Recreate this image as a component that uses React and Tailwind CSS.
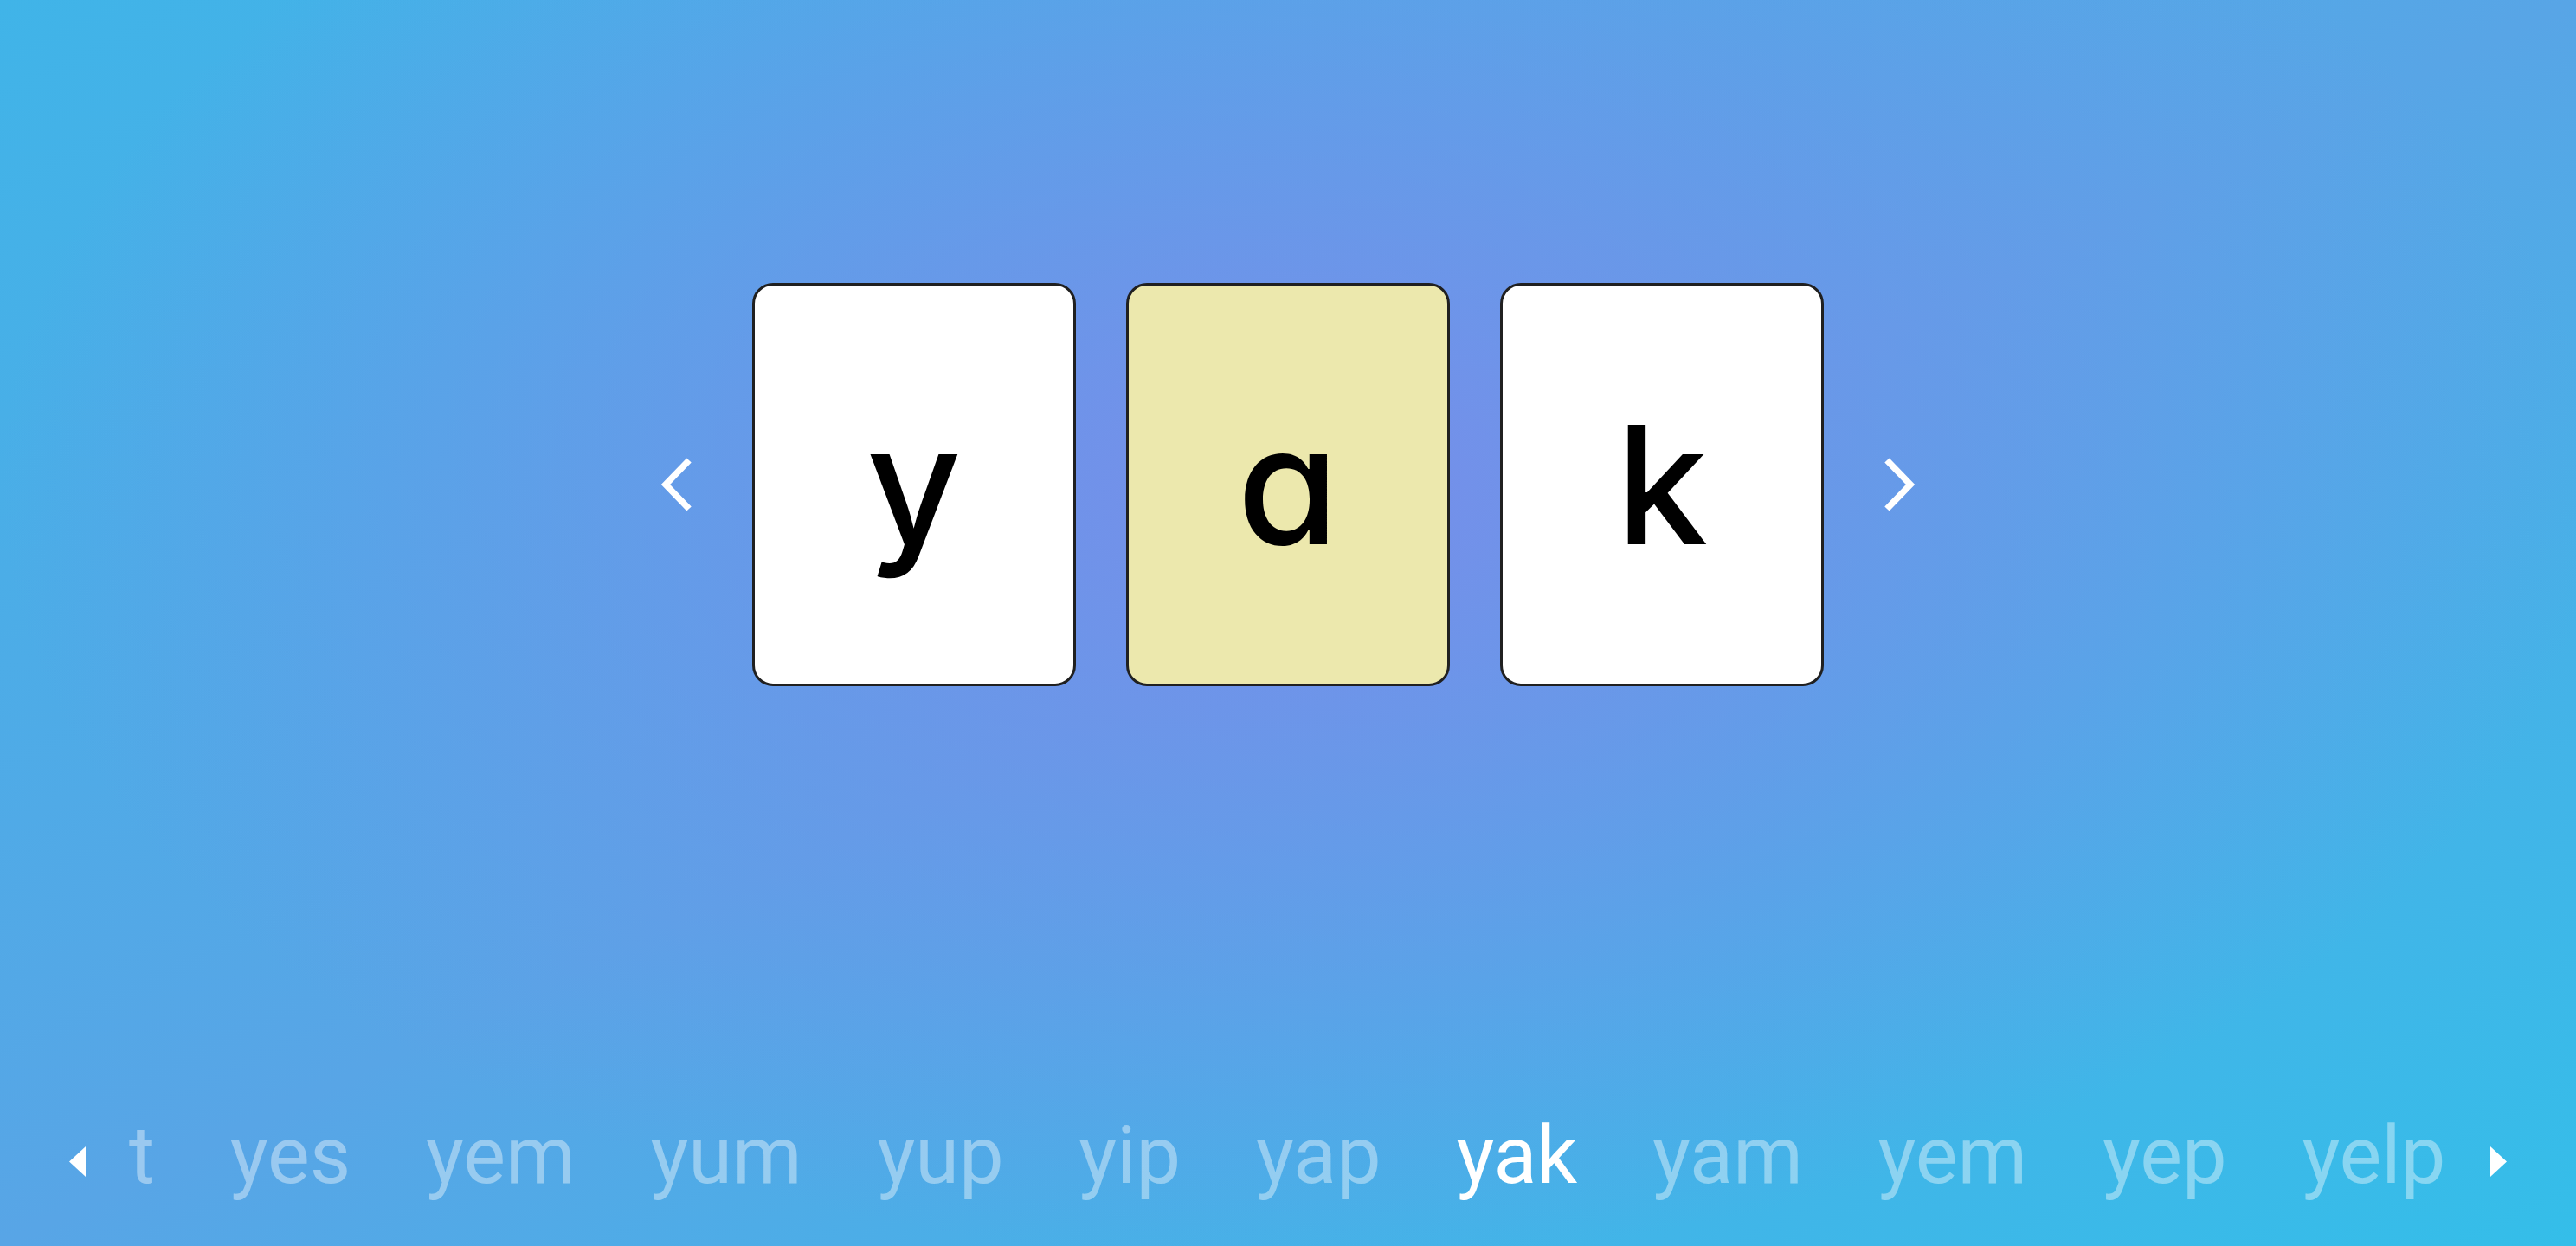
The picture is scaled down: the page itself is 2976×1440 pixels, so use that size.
import { useState } from "react";

const WORDS = ["t", "yes", "yem", "yum", "yup", "yip", "yap", "yak", "yam", "yem", "yep", "yelp"];

function Chevron({ dir }) {
  return (
    <svg width="38" height="64" viewBox="0 0 38 64" fill="none" className="shrink-0">
      <polyline
        points={dir === "left" ? "33,4 6,32 33,60" : "5,4 32,32 5,60"}
        stroke="white"
        strokeWidth="7.5"
        strokeLinecap="butt"
        strokeLinejoin="miter"
      />
    </svg>
  );
}

function Triangle({ dir }) {
  return (
    <svg width="19" height="35" viewBox="0 0 19 35" className="shrink-0 mt-3">
      <polygon points={dir === "left" ? "19,0 0,17.5 19,35" : "0,0 19,17.5 0,35"} fill="white" />
    </svg>
  );
}

function LetterCard({ letter, active }) {
  return (
    <div
      className={`w-[374px] h-[466px] rounded-[24px] border-[3px] border-[#202020] flex items-center justify-center ${
        active ? "bg-[#ece8ad]" : "bg-white"
      }`}
    >
      <span className="font-['Inter',sans-serif] [font-feature-settings:'cv11'] text-[190px] leading-[1.3] font-medium text-black">
        {letter}
      </span>
    </div>
  );
}

export default function App() {
  const [word] = useState("yak");
  const activeIndex = 1;

  return (
    <div className="h-screen w-full flex flex-col overflow-hidden [background-image:radial-gradient(ellipse_1500px_900px_at_1500px_560px,rgba(118,142,234,1),rgba(118,142,234,0)),linear-gradient(to_bottom_right,#40b4e8,#58a5e6,#34bee9)]">
      {/* Letter cards */}
      <div className="flex-1 flex items-center justify-center pb-[112px]">
        <Chevron dir="left" />
        <div className="flex gap-[58px] mx-[68px]">
          {word.split("").map((ch, i) => (
            <LetterCard key={i} letter={ch} active={i === activeIndex} />
          ))}
        </div>
        <Chevron dir="right" />
      </div>

      {/* Word strip */}
      <div className="h-[208px] flex items-center pl-[80px] pr-[80px]">
        <Triangle dir="left" />
        <div className="flex-1 min-w-0 overflow-hidden ml-[50px]">
          <div className="flex items-center gap-[87px] font-['Roboto',sans-serif] text-[92px] leading-[1.3] whitespace-nowrap">
            {WORDS.map((w, i) => (
              <span key={i} className={w === word ? "text-white" : "text-white/40"}>
                {w}
              </span>
            ))}
          </div>
        </div>
        <Triangle dir="right" />
      </div>
    </div>
  );
}
